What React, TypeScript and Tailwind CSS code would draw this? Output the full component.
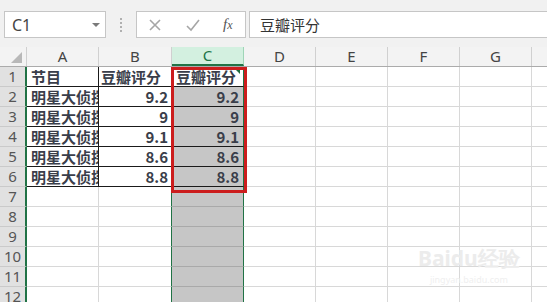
import React from "react";

const CJK = { fontFamily: '"Noto Sans CJK SC", "Noto Sans", sans-serif' } as const;
const UI = { fontFamily: '"Noto Sans", "Open Sans", sans-serif' } as const;

const cols = ["A", "B", "C", "D", "E", "F", "G"];
const widths = ["w-[72px]", "w-[73px]", "w-[72px]", "w-[72px]", "w-[72px]", "w-[72px]", "w-[72px]"];

const data: [string, string, string][] = [
  ["节目", "豆瓣评分", "豆瓣评分"],
  ["明星大侦探", "9.2", "9.2"],
  ["明星大侦探", "9", "9"],
  ["明星大侦探", "9.1", "9.1"],
  ["明星大侦探", "8.6", "8.6"],
  ["明星大侦探", "8.8", "8.8"],
];

function Row({ n }: { n: number }) {
  const d = n <= 6 ? data[n - 1] : null;
  const isHead = n === 1;
  const cellText = "text-[15px] font-bold text-[#3a3e4a] whitespace-nowrap overflow-hidden leading-[19px]";
  return (
    <div className="flex h-[20px] shrink-0">
      <div
        className="w-[27px] shrink-0 bg-[#e1e1e1] border-r-2 border-r-[#217346] border-b border-b-[#cacaca] flex items-center justify-center text-[15px] text-[#555] leading-none"
        style={UI}
      >
        {n}
      </div>
      {/* A */}
      <div
        className={`w-[72px] shrink-0 border-b ${d ? "border-b-[#1a1a1a] border-r border-r-[#1a1a1a]" : "border-b-[#d8d8d8] border-r border-r-[#d8d8d8]"} bg-white pl-[4px] flex items-center overflow-hidden`}
      >
        {d && (
          <span className={cellText} style={CJK}>
            {d[0]}
          </span>
        )}
      </div>
      {/* B */}
      <div
        className={`w-[73px] shrink-0 border-b ${d ? "border-b-[#1a1a1a] border-r border-r-[#1a1a1a]" : "border-b-[#d8d8d8] border-r border-r-[#217346]"} bg-white flex items-center ${isHead ? "justify-start pl-[2px]" : "justify-end pr-[3px]"}`}
      >
        {d && (
          <span className={cellText} style={CJK}>
            {d[1]}
          </span>
        )}
      </div>
      {/* C */}
      <div
        className={`relative w-[72px] shrink-0 border-b ${d ? "border-b-[#1a1a1a]" : "border-b-[#a9a9a9]"} border-r border-r-[#217346] ${isHead ? "bg-white justify-start pl-[4px]" : "bg-[#c6c6c6] justify-end pr-[4px]"} flex items-center`}
      >
        {d && (
          <span className={cellText} style={CJK}>
            {d[2]}
          </span>
        )}
        {isHead && (
          <span className="absolute right-[3px] top-[2px] w-0 h-0 border-l-[5px] border-l-transparent border-t-[5px] border-t-[#1e6b3d]" />
        )}
      </div>
      {[3, 4, 5, 6].map((i) => (
        <div key={i} className={`${widths[i]} shrink-0 border-b border-b-[#d8d8d8] border-r border-r-[#d8d8d8] bg-white`} />
      ))}
      <div className="flex-1 border-b border-b-[#d8d8d8] bg-white" />
    </div>
  );
}

export default function App() {
  return (
    <div className="relative w-[547px] h-[302px] overflow-hidden bg-white flex flex-col">
      {/* toolbar */}
      <div className="h-[47px] shrink-0 bg-[#f1f1f1] flex items-center pl-[4px] pt-[2px]">
        <div className="w-[102px] h-[27px] bg-white border border-[#c6c6c6] flex items-center justify-between pl-[7px] pr-[5px]">
          <span className="text-[16px] text-[#444] leading-none" style={UI}>
            C1
          </span>
          <span className="w-0 h-0 border-l-[4px] border-r-[4px] border-t-[4px] border-l-transparent border-r-transparent border-t-[#7a7a7a]" />
        </div>
        <div className="w-[30px] flex flex-col items-center gap-[2px]">
          <span className="w-[2px] h-[2px] bg-[#b0b0b0]" />
          <span className="w-[2px] h-[2px] bg-[#b0b0b0]" />
          <span className="w-[2px] h-[2px] bg-[#b0b0b0]" />
          <span className="w-[2px] h-[2px] bg-[#b0b0b0]" />
        </div>
        <div className="w-[110px] h-[27px] bg-white border border-[#c6c6c6] flex items-center">
          <svg width="16" height="16" viewBox="0 0 16 16" className="ml-[10px]">
            <path d="M3 3 L13 13 M13 3 L3 13" stroke="#a6a6a6" strokeWidth="1.6" />
          </svg>
          <svg width="16" height="16" viewBox="0 0 16 16" className="ml-[22px]">
            <path d="M2 9 L6 13 L14 3" stroke="#a6a6a6" strokeWidth="1.6" fill="none" />
          </svg>
          <span
            className="ml-[22px] text-[15px] italic text-[#555] leading-none"
            style={{ fontFamily: '"Liberation Serif", serif' }}
          >
            f<span className="text-[12px]">x</span>
          </span>
        </div>
        <div className="ml-[3px] flex-1 h-[27px] bg-white border border-[#c6c6c6] border-r-0 flex items-center pl-[10px]">
          <span className="text-[15px] text-[#333] leading-none" style={CJK}>
            豆瓣评分
          </span>
        </div>
      </div>
      {/* column headers */}
      <div className="h-[20px] shrink-0 flex bg-[#f3f3f3] border-b border-b-[#ababab]">
        <div className="w-[27px] shrink-0 relative border-r border-r-[#d0d0d0]">
          <span className="absolute right-[4px] bottom-[3px] w-0 h-0 border-l-[11px] border-l-transparent border-b-[11px] border-b-[#b8b8b8]" />
        </div>
        {cols.map((c, i) => (
          <div
            key={c}
            className={`${widths[i]} shrink-0 flex items-center justify-center text-[15px] leading-none ${c === "C" ? "bg-[#d3f0e0] text-[#217346] border-r border-r-[#9fd5b7] border-b-2 border-b-[#217346]" : "text-[#444] border-r border-r-[#d0d0d0]"}`}
            style={UI}
          >
            {c}
          </div>
        ))}
        <div className="flex-1" />
      </div>
      {/* rows */}
      {Array.from({ length: 12 }, (_, i) => (
        <Row key={i} n={i + 1} />
      ))}
      {/* red highlight box */}
      <div className="absolute left-[171px] top-[67px] w-[76px] h-[126px] border-[3px] border-[#cc1d1d] pointer-events-none" />
      {/* watermark */}
      <div className="absolute left-[418px] top-[248px] flex flex-col items-center pointer-events-none">
        <span className="text-[21px] font-bold text-[#ececec] leading-none" style={UI}>
          Baidu经验
        </span>
        <span className="text-[9px] text-[#efefef] leading-none mt-[6px]" style={UI}>
          jingyan.baidu.com
        </span>
      </div>
    </div>
  );
}
